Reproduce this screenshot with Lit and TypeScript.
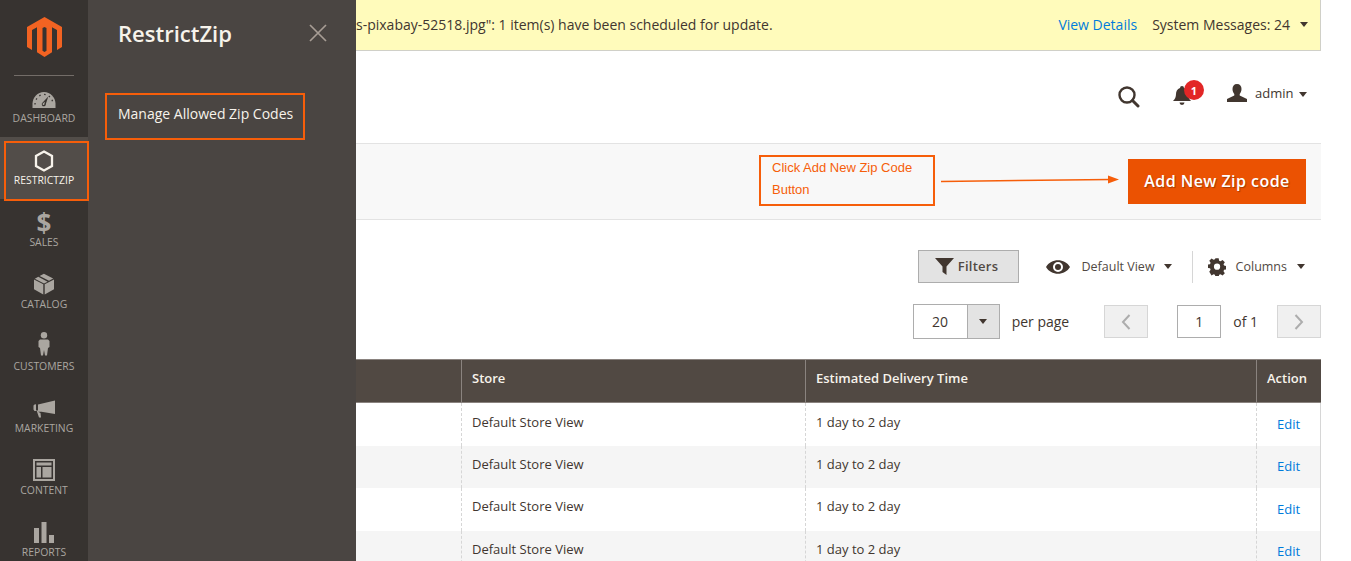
import { LitElement, html, css, svg } from "lit";
import { customElement } from "lit/decorators.js";

const nav = [
  { label: "DASHBOARD", dy: 2, icon: svg`<svg width="24" height="18" viewBox="0 0 24 18"><path fill="#aaa6a0" d="M12 1C5.500 1 .8 6.300.5 12.500V17h23v-4.500C23.200 6.300 18.500 1 12 1Z"/><path stroke="#373330" stroke-width="1.300" stroke-dasharray="1.500 3.500" fill="none" d="M3 13.500C3 8 7 3.400 12 3.400S21 8 21 13.500"/><path fill="#373330" d="M16.300 5.600 13.900 12.800a2.100 2.100 0 1 1-3.300-1.300Z"/><path fill="#aaa6a0" d="M13 10.800 12.400 12.900a.900.900 0 1 1-1.400-.6Z"/></svg>` },
  { label: "RESTRICTZIP", dy: 1, active: true, icon: svg`<svg width="20" height="22" viewBox="0 0 20 22"><path fill="none" stroke="#f7f3eb" stroke-width="2.300" d="M10 1.500 18 6v10l-8 4.500L2 16V6Z"/></svg>` },
  { label: "SALES", dy: 1, icon: html`<span class="dollar">$</span>` },
  { label: "CATALOG", dy: 0, icon: svg`<svg width="20" height="22" viewBox="0 0 20 22"><path fill="#aaa6a0" d="M9.300 11.300 0 6.400V16.300l9.300 5.200ZM10.700 11.300 20 6.400V16.300l-9.300 5.200ZM5.600 3.100 9.900.800 19.200 5.600 15 7.800ZM4.300 3.800 13.600 8.700 10 10.500.8 5.700Z"/></svg>` },
  { label: "CUSTOMERS", dy: -2, icon: svg`<svg width="12" height="24" viewBox="0 0 12 24"><circle cx="6" cy="3.300" r="3.200" fill="#aaa6a0"/><path fill="#aaa6a0" d="M2 7.500h8l1.500 1.500v6l-1.500 1L9 23.500H7L6 18l-1 5.500H3L2 16l-1.500-1V9Z"/></svg>` },
  { label: "MARKETING", dy: 1, icon: svg`<svg width="23" height="18" viewBox="0 0 23 18"><path fill="#aaa6a0" d="M22 .5V14L8.500 11.700 5 11.800 7.500 13 8 17.500H6L3.800 11H1.500L.5 9.500v-4L1.500 4.500 3 4.300V10.500H5V4.500Z"/></svg>` },
  { label: "CONTENT", dy: 0, icon: svg`<svg width="22" height="22" viewBox="0 0 22 22"><path fill="#aaa6a0" fill-rule="evenodd" d="M0 0h22v22H0ZM2 2v18h18V2Z"/><path fill="#aaa6a0" d="M3.500 3.500h15v3h-15ZM3.500 8h4.500v10.500H3.500ZM9.500 8h9v10.500h-9Z"/></svg>` },
  { label: "REPORTS", dy: 0, icon: svg`<svg width="20" height="21" viewBox="0 0 20 21"><path fill="#aaa6a0" d="M0 6h5v15H0ZM7.500 0h5v21h-5ZM15 13h5v8h-5Z"/></svg>` },
];

const rows = [
  { bg: false, h: 43, pad: 10, padE: 12 },
  { bg: true, h: 42, pad: 9, padE: 11 },
  { bg: false, h: 43, pad: 9, padE: 12 },
  { bg: true, h: 42, pad: 9, padE: 11 },
];

const caret = html`<span class="caret"></span>`;

@customElement("app-root")
export class AppRoot extends LitElement {
  static styles = css`
    :host { display: block; width: 1351px; height: 561px; overflow: hidden; font-family: "Open Sans", sans-serif; color: #41362f; background: #fff; }
    .shell { display: flex; height: 561px; overflow: hidden; }
    .sidebar { width: 88px; flex: none; background: #373330; position: relative; z-index: 1; }
    .logo { height: 75px; display: flex; justify-content: center; padding-top: 17px; box-sizing: border-box; }
    .rule { height: 1px; margin: 0 14px -1px; background: #736d68; }
    .item { height: 62px; display: flex; flex-direction: column; align-items: center; color: #aaa6a0; font-size: 10.4px; line-height: 14px; box-sizing: border-box; }
    .item .ic { height: 26px; margin-top: 10px; display: flex; align-items: center; justify-content: center; }
    .item .lb { height: 14px; }
    .item.active { background: #524d49; color: #f7f3eb; }
    .dollar { font-size: 26px; font-weight: 700; line-height: 26px; color: #aaa6a0; }
    .mark { position: absolute; left: 4px; top: 141px; width: 85px; height: 60px; border: 2px solid #f65e0a; box-sizing: border-box; }
    .panel { width: 268px; flex: none; background: #4a4542; box-sizing: border-box; padding: 0 0 0 17px; }
    .panel-head { display: flex; justify-content: space-between; align-items: flex-start; padding: 18px 29px 0 13px; height: 93px; box-sizing: border-box; }
    .panel-head h2 { margin: 0; font-size: 22px; line-height: 30px; font-weight: 600; color: #f7f3eb; }
    .close { margin-top: 6px; display: block; }
    .link { display: flex; align-items: center; width: 200px; height: 47px; box-sizing: border-box; border: 2px solid #f65e0a; padding: 0 0 6px 11px; font-size: 14px; color: #f7f3eb; white-space: nowrap; }
    .main { flex: 1; min-width: 0; }
    .msg { margin-right: 30px; height: 51px; box-sizing: border-box; background: #fffbbb; border: solid #d0d0c8; border-width: 0 1px 1px 0; display: flex; align-items: center; font-size: 14px; padding: 0 12px 2px 0; white-space: nowrap; }
    .msg .t { flex: 1; }
    .msg a { color: #007bdb; margin-right: 15px; }
    .msg .g { margin-right: 10px; }
    .top { height: 92px; display: flex; align-items: center; padding-left: 762px; box-sizing: border-box; }
    .top .bell { position: relative; margin-left: 33px; width: 33px; height: 24px; display: flex; margin-top: -4px; }
    .badge { position: absolute; left: 11px; top: -3px; width: 20px; height: 20px; border-radius: 50%; background: #e22626; color: #fff; font-size: 11px; font-weight: 700; display: flex; align-items: center; justify-content: center; }
    .top .user { margin-left: 21px; display: flex; margin-top: -8px; }
    .top .name { font-size: 13px; margin: -8px 6px 0 8px; }
    .top .caret { margin-top: -6px; }
    .caret { display: inline-block; width: 0; height: 0; border: solid transparent; border-width: 5px 4px 0; border-top-color: #41362f; }
    .actions { margin-right: 30px; height: 77px; box-sizing: border-box; background: #f8f8f8; border: solid #e3e3e3; border-width: 1px 0; display: flex; align-items: center; justify-content: flex-end; padding-right: 15px; }
    .callout { width: 176px; height: 51px; box-sizing: border-box; border: 2px solid #f65e0a; padding-left: 11px; font: 13px/22px "Liberation Sans", Arial, sans-serif; color: #f65e0a; margin-top: -3px; }
    .arrow { margin: -3px 9px 0 6px; display: block; }
    .btn { width: 178px; height: 45px; background: #eb5202; color: #fff; font-size: 16px; font-weight: 600; letter-spacing: .45px; display: flex; align-items: center; justify-content: center; text-shadow: 1px 1px 1px rgba(0,0,0,.3); margin-top: -1px; }
    .tools { display: flex; align-items: center; justify-content: flex-end; height: 33px; margin: 30px 46px 0 0; font-size: 13px; color: #514943; }
    .filters { width: 101px; height: 33px; box-sizing: border-box; background: #e3e3e3; border: 1px solid #adadad; display: flex; align-items: center; justify-content: center; gap: 4px; font-weight: 600; letter-spacing: .25px; padding: 0 3px 1px 0; }
    .view { display: flex; align-items: center; margin-left: 27px; }
    .view .n { margin-left: 12px; margin-right: 9px; font-size: 12.5px; }
    .sep { width: 1px; height: 32px; background: #d6d6d6; margin: 0 15px 0 20px; }
    .cols { display: flex; align-items: center; }
    .cols .n { margin: -1px 10px 0 10px; font-size: 12.5px; }
    .pager { display: flex; align-items: center; justify-content: flex-end; height: 35px; margin: 21px 30px 20px 0; font-size: 14px; }
    .sel { width: 87px; height: 35px; box-sizing: border-box; border: 1px solid #adadad; display: flex; align-items: stretch; }
    .sel .v { width: 53px; display: flex; align-items: center; justify-content: center; }
    .sel .d { flex: 1; background: #e3e3e3; border-left: 1px solid #adadad; display: flex; align-items: center; justify-content: center; }
    .pp { margin: 0 35px 0 12px; }
    .pg { width: 44px; height: 33px; box-sizing: border-box; background: #f0f0f0; border: 1px solid #d6d6d6; display: flex; align-items: center; justify-content: center; }
    .num { width: 44px; height: 33px; box-sizing: border-box; border: 1px solid #adadad; margin-left: 29px; display: flex; align-items: center; justify-content: center; }
    .of { margin: 0 19px 0 12px; }
    .grid { margin-right: 30px; font-size: 13px; }
    .row { display: grid; grid-template-columns: 105px 344px 451px 65px; box-sizing: border-box; }
    .head { height: 44px; background: #514943; color: #f7f3eb; font-weight: 600; border: solid #8a837f; border-width: 1px 0; }
    .head div { border-left: 1px solid #8a837f; padding: 0 0 6px 10px; display: flex; align-items: center; height: 42px; box-sizing: border-box; }
    .head div:first-child { border-left: 0; }
    .cell { border-left: 1px dashed #d6d6d6; padding-left: 10px; line-height: 18px; }
    .cell:first-child { border-left: 0; }
    .cell.e { border-right: 1px solid #d6d6d6; padding-left: 20px; color: #007bdb; }
    .row.alt { background: #f5f5f5; }
  `;

  render() {
    return html`<div class="shell">
      <nav class="sidebar">
        <div class="logo"><svg width="35" height="40" viewBox="0 0 35 40"><path fill="#f26322" fill-rule="evenodd" d="M17.500 0 35 10V30L30 33V13L25 10.200V35.300L17.500 40 10 35.300V10.200L5 13V33L0 30V10ZM17.500 10 15.500 11.100V33.800L17.500 35 19.500 33.800V11.100Z"/></svg></div>
        <div class="rule"></div>
        ${nav.map(
          (n) => html`<div class="item ${n.active ? "active" : ""}"><div class="ic" style="transform:translateY(${n.dy}px)">${n.icon}</div><div class="lb">${n.label}</div></div>`
        )}
        <div class="mark"></div>
      </nav>
      <aside class="panel">
        <div class="panel-head">
          <h2>RestrictZip</h2>
          <svg class="close" width="18" height="18" viewBox="0 0 18 18"><path stroke="#a79d95" stroke-width="1.700" d="M1 1 17 17M17 1 1 17"/></svg>
        </div>
        <div class="link">Manage Allowed Zip Codes</div>
      </aside>
      <main class="main">
        <div class="msg">
          <span class="t">s-pixabay-52518.jpg": 1 item(s) have been scheduled for update.</span>
          <a>View Details</a><span class="g">System Messages: 24</span>${caret}
        </div>
        <div class="top">
          <svg width="22" height="22" viewBox="0 0 22 22"><circle cx="9" cy="9" r="7.500" fill="none" stroke="#41362f" stroke-width="2.400"/><path stroke="#41362f" stroke-width="3" stroke-linecap="round" d="M14.500 14.500 20 20"/></svg>
          <div class="bell">
            <svg width="18" height="20" viewBox="0 0 18 20" style="margin-top:3px"><path fill="#41362f" d="M9 0a2 2 0 0 1 2 2c3 1 4 3.500 4 6 0 3 1 5 3 7H0c2-2 3-4 3-7 0-2.500 1-5 4-6a2 2 0 0 1 2-2ZM6.500 16.500h5a2.500 2.500 0 0 1-5 0Z"/></svg>
            <span class="badge">1</span>
          </div>
          <div class="user"><svg width="20" height="18" viewBox="0 0 20 18"><path fill="#41362f" d="M10 0c3 0 4.500 2 4.500 5 0 2-.8 3.800-1.800 5v1.500L20 15v3H0v-3l7.300-3.500V10C6.300 8.800 5.500 7 5.500 5c0-3 1.500-5 4.500-5Z"/></svg></div>
          <span class="name">admin</span>${caret}
        </div>
        <div class="actions">
          <div class="callout">Click Add New Zip Code<br />Button</div>
          <svg class="arrow" width="178" height="10" viewBox="0 0 178 10"><path stroke="#f65e0a" stroke-width="1.500" d="M0 6.500 170 4.500"/><path fill="#f65e0a" d="M167 .5 178 4.500 167 8.500Z"/></svg>
          <div class="btn">Add New Zip code</div>
        </div>
        <div class="tools">
          <div class="filters"><svg width="19" height="17" viewBox="0 0 19 17"><path fill="#41362f" d="M0 0h19l-7.500 8.500V17l-4-3V8.500Z"/></svg>Filters</div>
          <div class="view"><svg width="24" height="14" viewBox="0 0 24 14"><path fill="#41362f" fill-rule="evenodd" d="M0 7C5-2 19-2 24 7 19 16 5 16 0 7ZM12 2a5 5 0 1 0 0 10 5 5 0 0 0 0-10Z"/><circle cx="12" cy="7" r="3" fill="#41362f"/></svg><span class="n">Default View</span>${caret}</div>
          <div class="sep"></div>
          <div class="cols"><svg width="18" height="18" viewBox="0 0 18 18"><path fill="#41362f" fill-rule="evenodd" d="M7.300 0h3.400l.5 2.500 1.500.6 2.100-1.400 2.400 2.400-1.400 2.100.6 1.500 2.600.5v3.400l-2.600.5-.6 1.500 1.400 2.100-2.400 2.400-2.100-1.400-1.500.6-.5 2.600H7.300l-.5-2.600-1.500-.6-2.100 1.400L.8 14.100l1.400-2.100-.6-1.500L-1 10V6.700l2.600-.5.600-1.500L.8 2.600 3.200.2l2.100 1.400 1.500-.6ZM9 5.500a3.300 3.300 0 1 0 0 6.600 3.300 3.300 0 0 0 0-6.600Z" transform="translate(.5 .3) scale(.95)"/></svg><span class="n">Columns</span>${caret}</div>
        </div>
        <div class="pager">
          <div class="sel"><div class="v">20</div><div class="d">${caret}</div></div>
          <span class="pp">per page</span>
          <div class="pg"><svg width="10" height="16" viewBox="0 0 10 16"><path fill="none" stroke="#adadad" stroke-width="2" d="M8.500 1 2 8l6.500 7"/></svg></div>
          <div class="num">1</div>
          <span class="of">of 1</span>
          <div class="pg"><svg width="10" height="16" viewBox="0 0 10 16"><path fill="none" stroke="#adadad" stroke-width="2" d="M1.500 1 8 8l-6.500 7"/></svg></div>
        </div>
        <div class="grid">
          <div class="row head"><div></div><div>Store</div><div>Estimated Delivery Time</div><div>Action</div></div>
          ${rows.map(
            (r) => html`<div class="row ${r.bg ? "alt" : ""}" style="height:${r.h}px">
              <div class="cell"></div>
              <div class="cell" style="padding-top:${r.pad}px">Default Store View</div>
              <div class="cell" style="padding-top:${r.pad}px">1 day to 2 day</div>
              <div class="cell e" style="padding-top:${r.padE}px">Edit</div>
            </div>`
          )}
        </div>
      </main>
    </div>`;
  }
}
